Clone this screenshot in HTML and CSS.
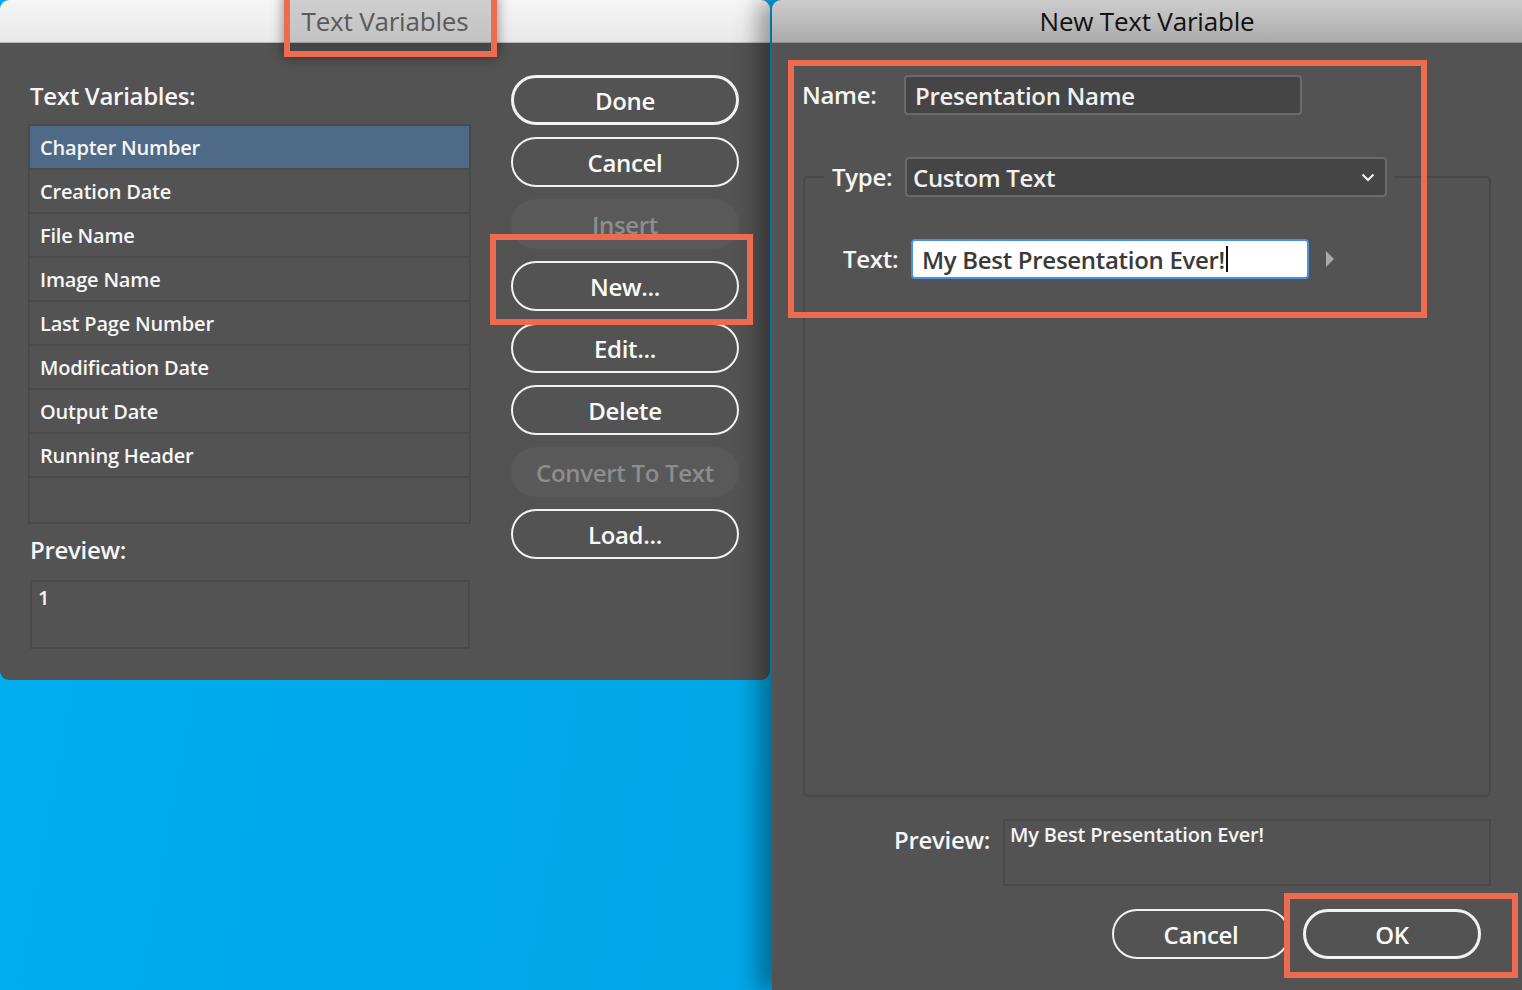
FILE: index.html
```html
<!DOCTYPE html>
<html lang="en">
<head>
<meta charset="utf-8">
<title>Text Variables</title>
<link rel="stylesheet" href="styles.css">
</head>
<body>
<div class="desk">
  <section class="dlg dlg-left">
    <header class="titlebar titlebar-light">Text Variables</header>
    <div class="left-body">
      <div class="left-col">
        <div class="lbl lbl-head">Text Variables:</div>
        <ul class="var-list">
          <li class="row selected">Chapter Number</li>
          <li class="row">Creation Date</li>
          <li class="row">File Name</li>
          <li class="row">Image Name</li>
          <li class="row">Last Page Number</li>
          <li class="row">Modification Date</li>
          <li class="row">Output Date</li>
          <li class="row">Running Header</li>
          <li class="row empty"></li>
        </ul>
        <div class="lbl lbl-preview">Preview:</div>
        <div class="preview-box">1</div>
      </div>
      <div class="btn-col">
        <button class="btn btn-default">Done</button>
        <button class="btn">Cancel</button>
        <button class="btn btn-disabled">Insert</button>
        <button class="btn">New...</button>
        <button class="btn">Edit...</button>
        <button class="btn">Delete</button>
        <button class="btn btn-disabled">Convert To Text</button>
        <button class="btn">Load...</button>
      </div>
    </div>
  </section>

  <section class="dlg dlg-right">
    <header class="titlebar titlebar-gray">New Text Variable</header>
    <div class="right-body">
      <div class="name-row">
        <span class="lbl name-lbl">Name:</span>
        <div class="field field-dark">Presentation Name</div>
      </div>
      <fieldset class="group">
        <legend class="group-legend">
          <span class="lbl type-lbl">Type:</span>
          <div class="field field-dark select">
            <span>Custom Text</span>
            <svg class="chev" width="14" height="9" viewBox="0 0 14 9"><path d="M1.5 1.5 L7 7 L12.5 1.5" fill="none" stroke="#f2f2f2" stroke-width="2"/></svg>
          </div>
        </legend>
        <div class="text-row">
          <span class="lbl text-lbl">Text:</span>
          <div class="field field-focus">My Best Presentation Ever!<span class="caret"></span></div>
          <svg class="tri" width="10" height="16" viewBox="0 0 10 16"><path d="M1 0 L9 8 L1 16 Z" fill="#a9a9a9"/></svg>
        </div>
      </fieldset>
      <div class="preview-row">
        <span class="lbl rprev-lbl">Preview:</span>
        <div class="rpreview-box">My Best Presentation Ever!</div>
      </div>
      <div class="action-row">
        <button class="btn btn-sm">Cancel</button>
        <button class="btn btn-sm btn-default">OK</button>
      </div>
    </div>
  </section>

  <div class="mark mark-title"></div>
  <div class="mark mark-new"></div>
  <div class="mark mark-fields"></div>
  <div class="mark mark-ok"></div>
</div>
</body>
</html>
```
FILE: styles.css
```css
* { box-sizing: border-box; }
html, body { margin: 0; padding: 0; }
body {
  width: 1522px;
  height: 990px;
  overflow: hidden;
  font-family: "Open Sans", "Noto Sans", sans-serif;
  background: linear-gradient(100deg, #00aeef 0%, #00a6e6 60%, #0090cf 100%);
}
.desk {
  position: relative;
  display: flex;
  align-items: flex-start;
  gap: 2px;
  width: 1522px;
  height: 990px;
}
.dlg {
  background: #535353;
  color: #f4f4f4;
  display: flex;
  flex-direction: column;
}
.dlg-left {
  width: 770px;
  height: 680px;
  border-radius: 9px;
  overflow: hidden;
}
.dlg-right {
  flex: 1;
  height: 990px;
  border-radius: 9px 0 0 0;
  overflow: hidden;
  box-shadow: -14px 0 22px rgba(0, 0, 0, 0.35);
  position: relative;
  z-index: 1;
}
.titlebar {
  height: 43px;
  flex: none;
  display: flex;
  align-items: center;
  justify-content: center;
  font-size: 26px;
  letter-spacing: -0.2px;
  border-bottom: 1px solid #b8b8b8;
}
.titlebar-light {
  background: linear-gradient(#f6f6f6, #e8e8e8);
  color: #6c6c6c;
}
.titlebar-gray {
  background: linear-gradient(#cdcdcd, #ababab);
  color: #111;
  border-bottom-color: #8d8d8d;
}
.lbl {
  font-size: 24px;
  line-height: 30px;
  font-weight: 600;
  color: #f6f6f6;
  letter-spacing: -0.3px;
}

/* left dialog */
.left-body {
  flex: 1;
  display: flex;
  padding-left: 28px;
  gap: 40px;
}
.left-col {
  width: 443px;
  display: flex;
  flex-direction: column;
}
.lbl-head { margin: 38px 0 0 2px; }
.var-list {
  list-style: none;
  margin: 13px 0 0;
  padding: 0;
  border: 2px solid #4a4a4a;
}
.row {
  height: 44px;
  padding-left: 10px;
  display: flex;
  align-items: center;
  font-size: 20px;
  font-weight: 600;
  letter-spacing: -0.2px;
  border-bottom: 2px solid #4a4a4a;
  color: #f6f6f6;
}
.row.empty { border-bottom: 0; }
.row.selected { background: #4e6a86; }
.lbl-preview { margin: 11px 0 0 2px; }
.preview-box {
  margin: 15px 1px 0 2px;
  height: 69px;
  border: 2px solid #4a4a4a;
  padding: 3px 0 0 6px;
  font-size: 20px;
  font-weight: 600;
  line-height: 26px;
}
.btn-col {
  padding-top: 32px;
  display: flex;
  flex-direction: column;
  gap: 12px;
}
.btn {
  width: 228px;
  height: 50px;
  border-radius: 25px;
  border: 2px solid #f2f2f2;
  background: transparent;
  color: #fafafa;
  font-family: inherit;
  font-size: 24px;
  font-weight: 600;
  letter-spacing: -0.3px;
  padding: 0;
  display: flex;
  align-items: center;
  justify-content: center;
}
.btn-default { border-width: 3px; }
.btn-disabled {
  border-color: transparent;
  background: #595959;
  color: #8d8d8d;
}

/* right dialog */
.right-body {
  flex: 1;
  display: flex;
  flex-direction: column;
  padding: 0 31px;
}
.name-row {
  display: flex;
  align-items: center;
  margin-top: 32px;
}
.name-lbl { width: 102px; margin-left: -1px; }
.field {
  height: 40px;
  border-radius: 4px;
  font-size: 24px;
  font-weight: 600;
  letter-spacing: -0.3px;
  display: flex;
  align-items: center;
  padding-left: 9px;
}
.field-dark {
  width: 398px;
  background: #454545;
  border: 2px solid #6a6a6a;
  color: #f0f0f0;
}
.group {
  margin: 42px 0 0;
  padding: 0;
  height: 640px;
  border: 2px solid #484848;
  border-radius: 5px;
  min-width: 0;
}
.group-legend {
  margin-left: 19px;
  padding: 0 8px;
  display: flex;
  align-items: center;
  gap: 11px;
}
.type-lbl { width: 62px; }
.select {
  width: 482px;
  justify-content: space-between;
  padding-left: 6px;
  padding-right: 10px;
}
.chev { display: block; }
.text-row {
  display: flex;
  align-items: center;
  margin-top: 42px;
  padding-left: 38px;
}
.text-lbl { width: 68px; }
.field-focus {
  width: 398px;
  background: #ffffff;
  border: 2px solid #4a90e2;
  color: #3a3a3a;
  padding-left: 9px;
}
.caret {
  display: inline-block;
  width: 2px;
  height: 26px;
  background: #111;
  margin-left: 1px;
}
.tri { margin-left: 16px; }
.preview-row {
  display: flex;
  align-items: flex-start;
  margin-top: 22px;
}
.rprev-lbl {
  width: 200px;
  text-align: right;
  margin-top: 6px;
  padding-right: 13px;
}
.rpreview-box {
  flex: 1;
  height: 67px;
  border: 2px solid #4a4a4a;
  font-size: 20px;
  font-weight: 600;
  letter-spacing: -0.2px;
  line-height: 26px;
  padding: 1px 0 0 5px;
}
.action-row {
  display: flex;
  justify-content: flex-end;
  gap: 13px;
  margin-top: 23px;
  padding-right: 10px;
}
.btn-sm { width: 178px; }

/* annotation marks */
.mark {
  position: absolute;
  border: 6px solid #ef6b4f;
  z-index: 5;
}
.mark-title {
  left: 284px; top: -6px; width: 213px; height: 63px;
  background: rgba(0, 0, 0, 0.16);
  box-shadow: 0 0 12px rgba(0, 0, 0, 0.45);
}
.mark-new { left: 490px; top: 234px; width: 263px; height: 91px; }
.mark-fields { left: 788px; top: 60px; width: 639px; height: 258px; }
.mark-ok { left: 1284px; top: 893px; width: 234px; height: 85px; }
```
